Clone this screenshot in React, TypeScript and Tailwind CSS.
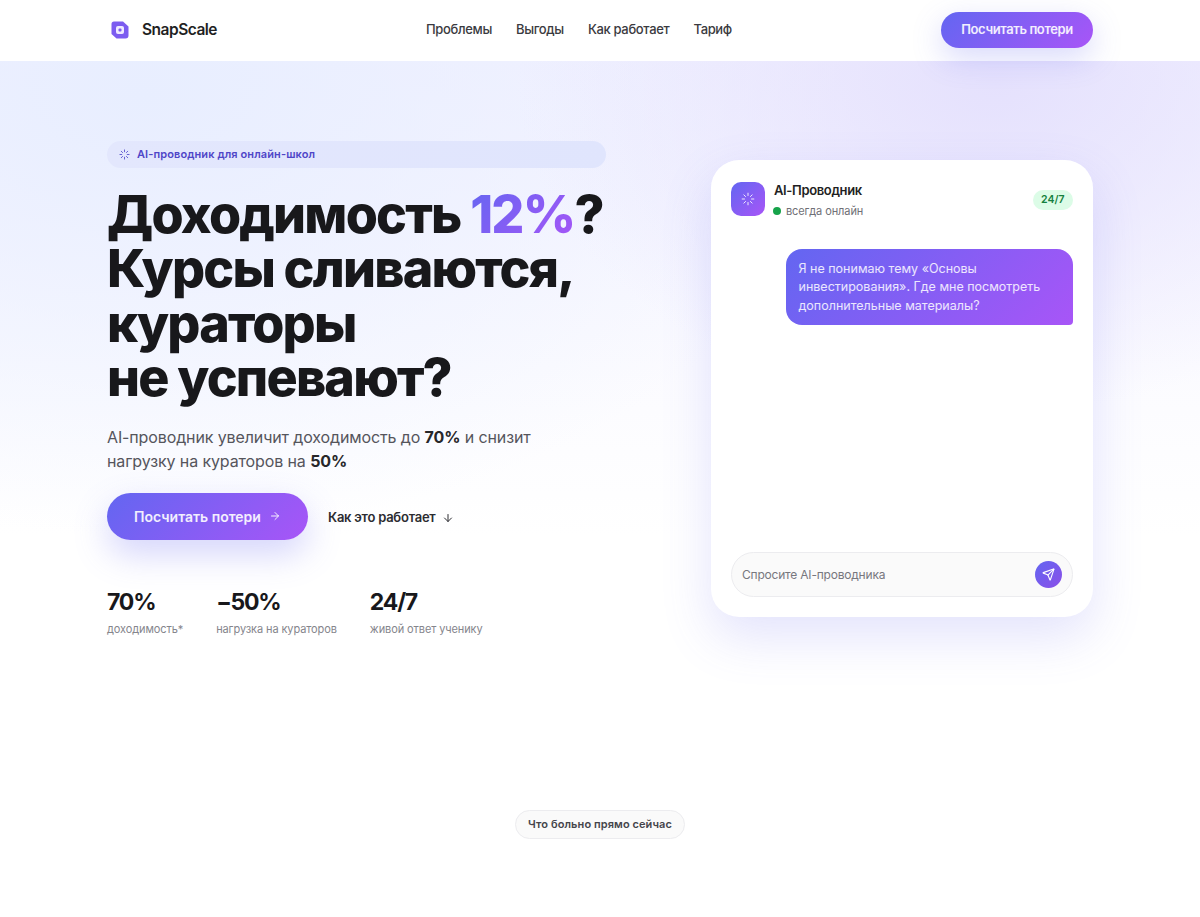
import { ArrowDown, ArrowRight, Loader, Send } from "lucide-react";

const gradient = "bg-[linear-gradient(135deg,#6366f1,#a855f7)]";

const stats = [
  { value: "70%", label: "доходимость*" },
  { value: "−50%", label: "нагрузка на кураторов" },
  { value: "24/7", label: "живой ответ ученику" },
];

const navLinks = ["Проблемы", "Выгоды", "Как работает", "Тариф"];

const Header = () => {
  return (
    <header className="h-[61px] bg-white flex items-center justify-between pl-[111px] pr-[107px] relative z-10">
      <div className="flex items-center gap-[13px] w-[300px] -mt-[2px]">
        <svg width="18" height="18" viewBox="0 0 18 18">
          <path d="M3 0.5h9l5.5 5v9a3 3 0 0 1-3 3h-9l-5-4.5v-10a2.5 2.5 0 0 1 2.5-2.5z" fill="#7c5cf0" />
          <rect x="5" y="5" width="8" height="8" rx="2" fill="#efeaff" />
          <rect x="7.5" y="7.5" width="3" height="3" rx="1" fill="#7c5cf0" />
        </svg>
        <span className="text-[15.5px] font-semibold text-[#1f1f23] tracking-[-0.5px]">SnapScale</span>
      </div>
      <nav className="flex items-center gap-[24px] text-[13px] font-medium tracking-[-0.34px] text-[#3a3a40] absolute left-[426px] -mt-[1px]">
        {navLinks.map((link) => (
          <span key={link}>{link}</span>
        ))}
      </nav>
      <button className={`h-[36px] w-[152px] -mt-[1px] rounded-full text-[13px] font-semibold tracking-[-0.4px] text-white/90 shadow-[0_10px_30px_rgba(99,102,241,0.25)] ${gradient}`}>
        Посчитать потери
      </button>
    </header>
  );
};

const Hero = () => {
  return (
    <section className="h-[680px] pl-[107px] pr-[107.5px] flex justify-between bg-[radial-gradient(ellipse_480px_330px_at_83%_3%,#e5e1fd,transparent),radial-gradient(ellipse_700px_440px_at_12%_5%,#e8eeff,transparent),linear-gradient(180deg,#f3f2ff_0%,#fbfbff_45%,#ffffff_70%)]">
      <div className="w-[499px] pt-[80px]">
        <div className="h-[27px] rounded-full bg-[linear-gradient(90deg,#e3e7fd,#e0e5fd)] flex items-center gap-[7px] pl-[12px] text-[11px] font-semibold tracking-[0.1px] text-[#4f46c8]">
          <Loader size={11} strokeWidth={1.8} />
          AI-проводник для онлайн-школ
        </div>
        <h1 className="mt-[20px] text-[52px] leading-[54.4px] font-extrabold tracking-[-1.8px] text-[#18181b]">
          Доходимость{" "}
          <span className="bg-[linear-gradient(135deg,#6366f1,#a855f7)] bg-clip-text text-transparent">12%</span>?
          <br />
          Курсы сливаются,
          <br />
          кураторы
          <br />
          не успевают?
        </h1>
        <p className="mt-[19px] text-[16px] leading-[24px] tracking-[-0.12px] text-[#55555c]">
          AI-проводник увеличит доходимость до <b className="font-bold text-[#27272a]">70%</b> и снизит
          <br />
          нагрузку на кураторов на <b className="font-bold text-[#27272a]">50%</b>
        </p>
        <div className="mt-[20px] flex items-center gap-[20px]">
          <button className={`h-[47px] w-[201px] rounded-full flex items-center justify-center gap-[8px] text-[14px] font-semibold text-white/90 shadow-[0_14px_34px_rgba(99,102,241,0.28)] ${gradient}`}>
            Посчитать потери
            <ArrowRight size={12} />
          </button>
          <span className="flex items-center gap-[6px] pt-[3px] text-[13px] font-semibold tracking-[-0.25px] text-[#2c2c31]">
            Как это работает
            <ArrowDown size={12} />
          </span>
        </div>
        <div className="mt-[48px] flex gap-[33px]">
          {stats.map((stat) => (
            <div key={stat.value}>
              <div className="text-[23px] leading-[28px] font-bold tracking-[-1.2px] text-[#18181b]">{stat.value}</div>
              <div className="mt-[5px] text-[11px] leading-[16px] tracking-[-0.1px] text-[#85858c]">{stat.label}</div>
            </div>
          ))}
        </div>
      </div>
      <div className="w-[381.5px] h-[457px] mt-[99px] rounded-[28px] bg-white shadow-[0_20px_50px_rgba(99,102,241,0.18)] p-[20px] flex flex-col">
        <div className="flex items-start justify-between">
          <div className="flex gap-[9px]">
            <div className={`w-[34px] h-[34px] mt-[2px] rounded-[10px] flex items-center justify-center text-white ${gradient}`}>
              <Loader size={14} strokeWidth={1.5} />
            </div>
            <div>
              <div className="text-[13px] leading-[20px] font-semibold tracking-[-0.35px] text-[#1f1f23]">AI-Проводник</div>
              <div className="mt-[1px] -ml-[1px] flex items-center gap-[5px] text-[11px] leading-[20px] tracking-[-0.1px] text-[#6f6f76]">
                <span className="w-[8px] h-[8px] rounded-full bg-[#16a34a]" />
                всегда онлайн
              </div>
            </div>
          </div>
          <span className="mt-[10px] h-[20px] px-[8px] rounded-full bg-[#dcfce7] flex items-center text-[10.5px] font-semibold text-[#15803d]">24/7</span>
        </div>
        <div className="mt-[28px] flex justify-end">
          <div className={`w-[287px] h-[76px] rounded-[16px] rounded-br-[4px] px-[13px] py-[10.5px] text-[12.5px] leading-[18.5px] text-white/85 ${gradient}`}>
            Я не понимаю тему «Основы инвестирования». Где мне посмотреть дополнительные материалы?
          </div>
        </div>
        <div className="mt-auto h-[45px] rounded-full bg-[#fafafa] border border-[#ececef] flex items-center justify-between pl-[10px] pr-[10px]">
          <span className="text-[12px] tracking-[-0.2px] text-[#77777e]">Спросите AI-проводника</span>
          <span className="w-[27px] h-[27px] rounded-full flex items-center justify-center bg-[linear-gradient(135deg,#6366f1,#8b4fe8)] text-white">
            <Send size={13} />
          </span>
        </div>
      </div>
    </section>
  );
};

const App = () => {
  return (
    <div className="min-h-[917px] bg-white font-['Inter',sans-serif] overflow-hidden">
      <Header />
      <Hero />
      <div className="mt-[69px] flex justify-center">
        <span className="h-[29px] px-[12px] rounded-full bg-[#fafafa] border border-[#ececef] flex items-center text-[11px] font-semibold tracking-[0.08px] text-[#45454b]">
          Что больно прямо сейчас
        </span>
      </div>
    </div>
  );
};

export default App;
